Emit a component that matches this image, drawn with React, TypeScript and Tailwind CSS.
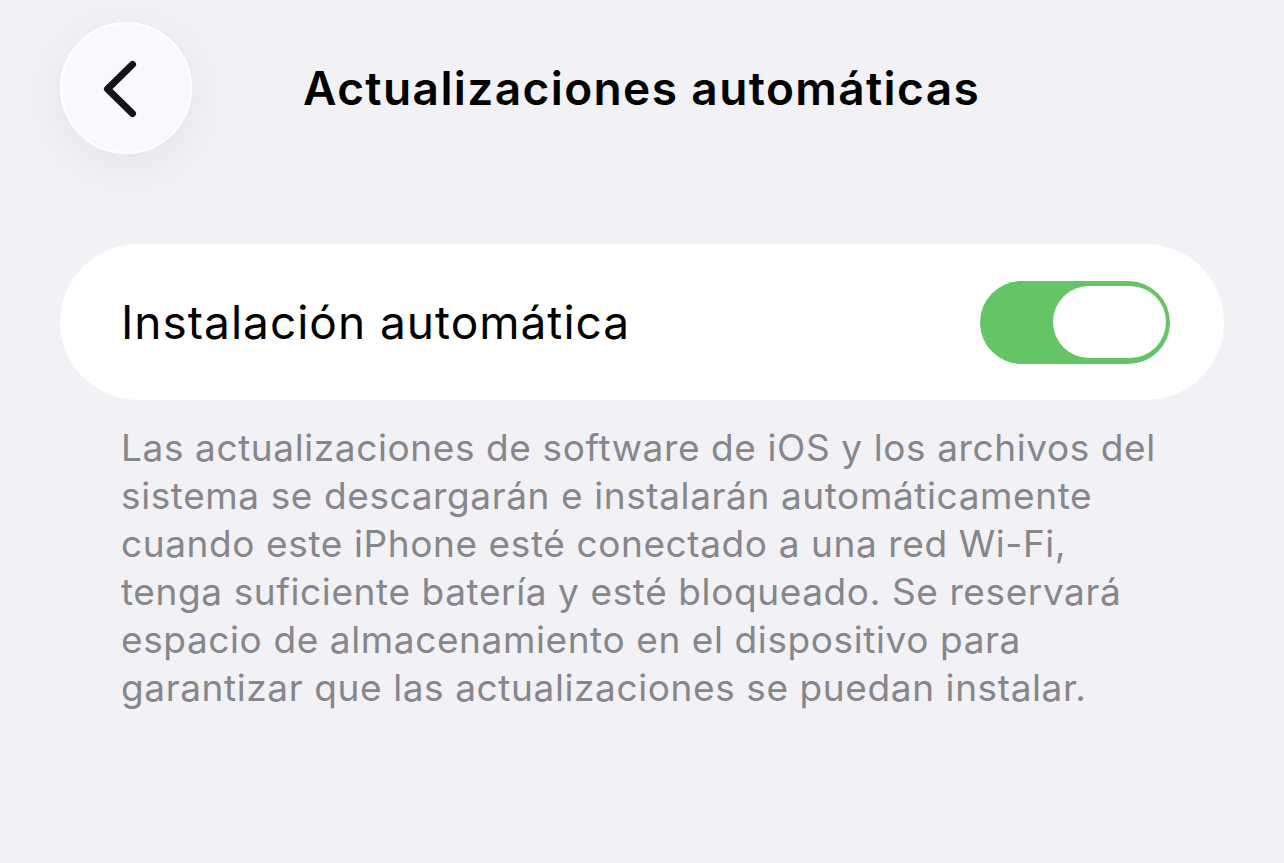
import React from "react";

export default function App() {
  const lines = [
    "Las actualizaciones de software de iOS y los archivos del",
    "sistema se descargarán e instalarán automáticamente",
    "cuando este iPhone esté conectado a una red Wi-Fi,",
    "tenga suficiente batería y esté bloqueado. Se reservará",
    "espacio de almacenamiento en el dispositivo para",
    "garantizar que las actualizaciones se puedan instalar.",
  ];
  return (
    <div
      className="w-[1284px] h-[863px] bg-[#f1f1f6] overflow-hidden"
      style={{ fontFamily: "Inter, 'Noto Sans', sans-serif" }}
    >
      <div className="flex items-center h-[176px] pl-[60px]">
        <div className="w-[132px] h-[132px] rounded-full bg-[#f9f9fd] border-2 border-white shadow-[0_10px_50px_rgba(0,0,0,0.06)] flex items-center justify-center">
          <svg width="132" height="132" viewBox="0 0 132 132" fill="none" className="shrink-0">
            <path d="M72.5 42.5 L47.5 67 L72.5 91.5" stroke="#141416" strokeWidth="7" strokeLinecap="round" strokeLinejoin="round" />
          </svg>
        </div>
        <div className="ml-[111px] text-[46px] font-semibold text-black tracking-[1.4px]">
          Actualizaciones automáticas
        </div>
      </div>
      <div className="mt-[68px] mx-[60px] h-[156px] rounded-full bg-white flex items-center justify-between pl-[61px] pr-[54px]">
        <div className="text-[46px] text-black tracking-[1px]">Instalación automática</div>
        <div className="w-[190px] h-[83px] rounded-full bg-[#65c466] flex items-center justify-end pr-[4px]">
          <div className="w-[113px] h-[72px] rounded-full bg-white" />
        </div>
      </div>
      <div className="mt-[24px] pl-[121px] text-[37px] leading-[48px] text-[#86868b] tracking-[0.6px]">
        {lines.map((l, i) => (
          <div key={i}>{l}</div>
        ))}
      </div>
    </div>
  );
}
